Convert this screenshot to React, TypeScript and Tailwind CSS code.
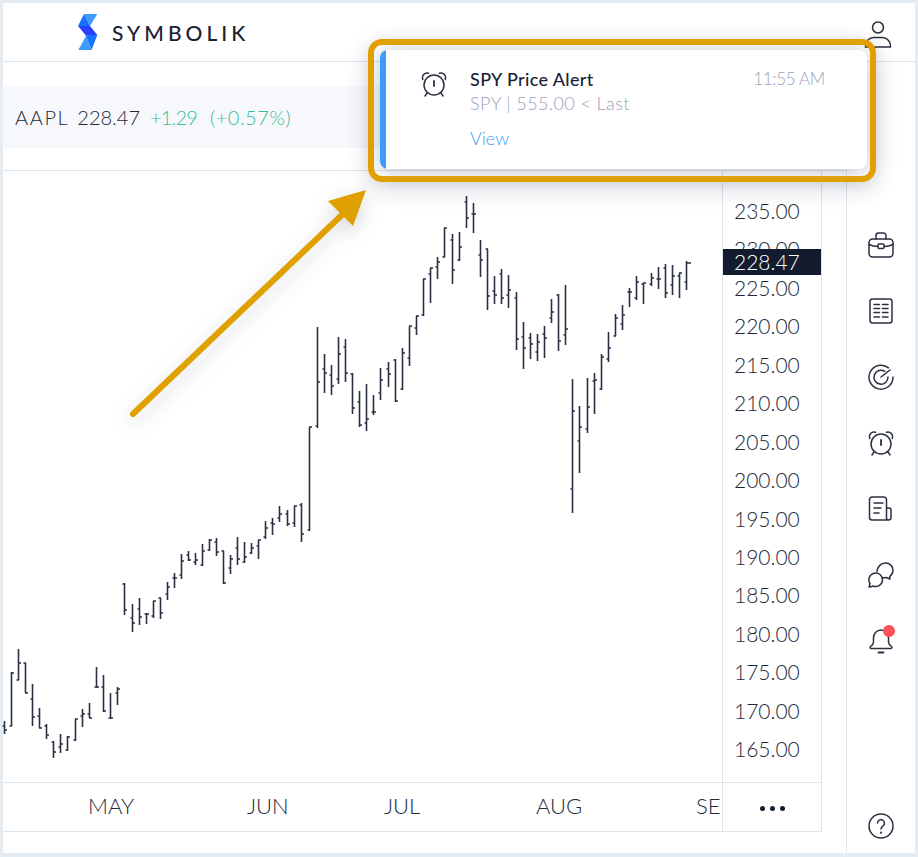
const bars: number[][] = [
[5,720,733,725,729],[12,671,725,725,672],[19,648,679,679,662],[26,662,692,662,692],[33,683,725,698,716],[40,707,727,715,727],[47,723,738,725,734],[54,740,757,741,751],[61,733,752,746,743],[68,735,750,749,736],[76,718,740,739,718],[83,708,726,715,713],[90,702,717,713,717],[97,666,687,686,686],[104,674,711,686,710],[111,692,718,717,717],[118,686,704,692,688],[125,582,614,583,609],[133,603,631,617,622],[140,597,624,608,616],[147,612,623,613,613],[154,600,617,615,600],[161,597,618,597,612],
[168,581,599,593,586],[175,572,587,577,577],[182,553,578,574,560],[189,550,560,554,559],[196,552,564,561,559],[203,543,565,564,550],[210,538,550,549,539],[217,537,555,541,551],[224,550,583,550,582],[231,554,573,567,558],[238,536,564,547,558],[245,541,562,561,556],[252,542,553,552,547],[259,539,558,545,539],[266,520,538,536,527],[273,517,534,522,523],[280,505,521,517,513],[288,509,525,513,523],[295,505,526,522,505],[302,502,541,504,533],[310,426,530,529,426],
[318,326,427,425,381],[325,353,392,368,372],[332,364,394,374,385],[339,336,383,378,353],[346,338,381,346,372],[353,372,413,373,407],[360,390,426,401,424],[367,383,430,422,418],[374,394,414,411,411],[381,367,399,392,379],[389,361,386,368,373],[396,358,401,359,400],[403,347,389,388,352],[410,325,365,357,325],[417,315,334,327,315],[424,278,315,314,278],[431,267,302,273,267],[438,256,278,266,261],[445,227,256,256,227],[453,233,283,239,269],[460,231,260,259,246],[467,195,227,201,217],[474,202,232,213,213],[481,239,276,254,259],[488,248,309,248,295],[495,275,303,290,294],[502,268,303,273,297],[509,274,307,294,289],
[517,291,349,297,338],[524,321,368,336,347],[531,332,358,337,343],[538,333,360,351,341],[545,325,357,333,337],[552,298,322,317,311],[559,293,350,294,340],[566,284,344,334,328],
[573,378,512,488,410],[580,405,472,440,426],[588,377,432,428,406],[595,372,413,380,379],[602,353,389,388,356],[609,331,361,358,347],[616,313,335,335,317],[623,304,329,323,314],[630,287,306,291,291],[637,275,299,297,281],[644,282,303,283,282],[652,272,285,283,277],[659,266,288,278,278],[666,263,297,267,292],[673,264,294,284,275],[680,272,297,275,272],[687,260,289,281,262],
];

const font = { fontFamily: 'Lato, "Liberation Sans", sans-serif' };
const prices = ['235.00','230.00','225.00','220.00','215.00','210.00','205.00','200.00','195.00','190.00','185.00','180.00','175.00','170.00','165.00'];

function Ico({ children }: { children: React.ReactNode }) {
  return (
    <div className="h-[66px] flex items-center justify-center">
      <svg width="26" height="26" viewBox="0 0 26 26" fill="none" stroke="#2a3040" strokeWidth="1.5" strokeLinecap="round" strokeLinejoin="round">{children}</svg>
    </div>
  );
}

function Alarm({ size = 26 }: { size?: number }) {
  return (
    <svg width={size} height={size} viewBox="0 0 26 26" fill="none" stroke="#2a3040" strokeWidth="1.5" strokeLinecap="round" strokeLinejoin="round">
      <circle cx="13" cy="14" r="10" />
      <path d="M13 10v5" strokeWidth="1.8" />
      <path d="M1.8 8.5C.5 5 3.5 1 7.5 2.2M24.2 8.5C25.5 5 22.5 1 18.5 2.2" />
      <path d="M6 22l-2 3M20 22l2 3" />
    </svg>
  );
}

export default function App() {
  return (
    <div className="relative w-[918px] h-[857px] overflow-hidden bg-[#e5edf2] pt-[3px] pl-[3px] pr-[3px] pb-[4px]" style={font}>
      <div className="flex flex-col h-full bg-white text-[#232938]">
        <header className="h-[59px] shrink-0 border-b border-[#dfe3ec] flex items-center justify-between pl-[75px] pr-[22px]">
          <div className="flex items-center gap-[14px]">
            <svg width="20" height="36" viewBox="0 0 20 36">
              <polygon points="6,0 19.300,0 12,12" fill="#3f9bff" />
              <polygon points="6,0 12,12 0,12" fill="#1673ff" />
              <polygon points="0,12 12,12 19.300,21 7.500,21" fill="#2b3fff" />
              <polygon points="7.500,21 19.300,21 13.600,36" fill="#1673ff" />
              <polygon points="8,22 13.600,36 .3,36" fill="#3f9bff" />
            </svg>
            <span className="text-[21px] font-medium tracking-[4px] text-[#1a2233] leading-none">SYMBOLIK</span>
          </div>
          <svg className="mt-[3px]" width="30" height="30" viewBox="0 0 30 30" fill="none" stroke="#2a3040" strokeWidth="1.5">
            <circle cx="15" cy="8.5" r="5.5" />
            <path d="M2.5 28c-.5-5 3-9 8-9.5h9c5 .5 8.500 4.500 8 9.500z" />
          </svg>
        </header>
        <div className="flex flex-1 min-h-0">
          <main className="w-[844px] shrink-0 flex flex-col border-r border-[#dfe6ef] pb-[21px]">
            <div className="h-[109px] shrink-0 border-b border-[#dfe3ec] pt-[24px]">
              <div className="h-[62px] bg-[#f7f8fb] flex items-center pl-[12px] text-[20px] font-light">
                <span className="tracking-[1.6px]">AAPL</span>
                <span className="ml-[8px]">228.47</span>
                <span className="ml-[10px] text-[#36bd9b] tracking-[-0.8px]">+1.29</span>
                <span className="ml-[13px] text-[#36bd9b] tracking-[0.5px]">(+0.57%)</span>
              </div>
            </div>
            <div className="flex-1 min-h-0 flex flex-col w-[819px] border-r border-b border-[#dfe3ec]">
              <div className="flex flex-1 min-h-0">
                <div className="flex-1 min-w-0 relative">
                  <svg className="absolute left-[-3px] top-[-170px]" width="722" height="785" fill="none" stroke="#2a3040">
                    {bars.map(([x, h, l, o, c]) => (
                      <g key={x}>
                        <path d={`M${x - 0.5} ${h}V${l}`} strokeWidth="1.6" />
                        <path d={`M${x - 2.5} ${o}H${x}M${x - 1} ${c}H${x + (x === 687 ? 4 : 2)}`} strokeWidth="1.6" />
                      </g>
                    ))}
                  </svg>
                </div>
                <div className="w-[99px] shrink-0 border-l border-[#dfe3ec] relative pt-[21px] pl-[11px] text-[21px] font-light leading-[38.43px]">
                  {prices.map((p) => <div key={p}>{p}</div>)}
                  <div className="absolute left-0 top-[78px] w-[98px] h-[26px] bg-[#131c2e] text-white flex items-center pl-[11px]">228.47</div>
                </div>
              </div>
              <div className="h-[49px] shrink-0 border-t border-[#dfe3ec] flex text-[22px] font-light">
                <div className="flex-1 min-w-0 relative overflow-hidden leading-[46px]">
                  <span className="absolute left-[85px]">MAY</span>
                  <span className="absolute left-[244px]">JUN</span>
                  <span className="absolute left-[381px]">JUL</span>
                  <span className="absolute left-[533px]">AUG</span>
                  <span className="absolute left-[693px]">SE</span>
                </div>
                <div className="w-[99px] shrink-0 border-l border-[#dfe3ec] flex items-center justify-center pt-[2px] gap-[5px]">
                  <span className="w-[5px] h-[5px] rounded-full bg-[#131c2e]" />
                  <span className="w-[5px] h-[5px] rounded-full bg-[#131c2e]" />
                  <span className="w-[5px] h-[5px] rounded-full bg-[#131c2e]" />
                </div>
              </div>
            </div>
          </main>
          <aside className="flex-1 flex flex-col pt-[150px] pb-[14px]">
            <Ico>
              <rect x="1" y="7" width="24" height="18" rx="3.500" />
              <path d="M8 7V3.500A2.500 2.500 0 0 1 10.500 1h5A2.500 2.500 0 0 1 18 3.500V7" />
              <path d="M1 12.500c3 1.500 6 2 9 2M25 12.500c-3 1.500-6 2-9 2" />
              <rect x="10" y="12" width="6" height="4.500" rx="1" />
            </Ico>
            <Ico>
              <rect x="2" y="1" width="22" height="24" rx="2.500" />
              <path d="M6 6.500h5.500M14.500 6.500H20M6 10.500h5.500M14.500 10.500H20M6 14.500h5.500M14.500 14.500H20M6 19h5.500M14.500 19H20" />
            </Ico>
            <Ico>
              <path d="M20.500 3.800A12 12 0 1 0 25 13" />
              <path d="M16.800 7.300A7 7 0 1 0 20 13" />
              <path d="M13 13l9-7" />
            </Ico>
            <div className="h-[66px] flex items-center justify-center"><Alarm /></div>
            <Ico>
              <path d="M20 24H4a2.500 2.500 0 0 1-2.500-2.500V3.500A2.500 2.500 0 0 1 4 1h12a2.500 2.500 0 0 1 2.500 2.500V22a2 2 0 0 0 2 2a2.500 2.500 0 0 0 2.500-2.500V14a2 2 0 0 0-2-2h-2" />
              <path d="M6 7h9M6 12h7M6 17h5" />
            </Ico>
            <Ico>
              <path d="M9 9.500C9.500 4.500 13 1 17.500 1c4.300 0 7.500 3.200 7.500 7.300 0 2.700-1.300 4.800-3.300 6.200l.3 2.500-3.700-1.500c-1 .3-2 .4-3 .3" />
              <path d="M1 25l1-3.500A6.800 6.800 0 1 1 5 24c-1.500.700-2.800 1-4 1z" />
            </Ico>
            <div className="h-[66px] flex items-center justify-center relative">
              <svg width="26" height="26" viewBox="0 0 26 26" fill="none" stroke="#2a3040" strokeWidth="1.5" strokeLinecap="round" strokeLinejoin="round">
                <path d="M5.500 14V10C5.500 5.500 9 2 13 2s7.500 3.500 7.500 8v4c0 2 1 3 3 4.500.8.700.5 2-.8 2H3.300c-1.300 0-1.600-1.300-.8-2C4.500 17 5.500 16 5.500 14z" />
                <path d="M10.500 24.500h5" strokeWidth="1.800" />
              </svg>
              <span className="absolute left-[36px] top-[17px] w-[12px] h-[12px] rounded-full bg-[#ff5257]" />
            </div>
            <div className="mt-auto flex justify-center">
              <svg width="26" height="26" viewBox="0 0 26 26" fill="none" stroke="#2a3040" strokeWidth="1.5" strokeLinecap="round" strokeLinejoin="round">
                <circle cx="13" cy="13" r="12" />
                <path d="M9.500 10a3.500 3.500 0 1 1 5.500 3c-1.300.8-2 1.500-2 3" />
                <path d="M13 19.500v.3" strokeWidth="2" />
              </svg>
            </div>
          </aside>
        </div>
      </div>

      {/* annotation arrow */}
      <svg className="absolute left-0 top-0 [filter:drop-shadow(0_6px_10px_rgba(40,50,80,0.22))]" width="400" height="430" fill="none">
        <path d="M133 414L345 212" stroke="#e0a000" strokeWidth="6" strokeLinecap="round" />
        <polygon points="366,190 328,201 353,226" fill="#e0a000" />
      </svg>

      {/* notification toast */}
      <div className="absolute left-[380px] top-[50px] w-[487px] h-[119px] rounded-[8px] bg-white flex overflow-hidden shadow-[0_2px_20px_rgba(40,50,80,0.3)]">
        <div className="w-[6px] bg-[#3d9bfa] shrink-0" />
        <div className="w-[35px] shrink-0" />
        <div className="w-[49px] shrink-0 pt-[21px]"><Alarm /></div>
        <div className="flex-1 pt-[17px]">
          <div className="text-[18px] font-medium text-[#1a2233] leading-[24px] tracking-[0.35px]">SPY Price Alert</div>
          <div className="text-[18px] font-light text-[#98a1ba] leading-[24px] tracking-[0.4px]">SPY | 555.00 &lt; Last</div>
          <div className="text-[18px] font-light text-[#3d9bfa] leading-[24px] mt-[11px]">View</div>
        </div>
        <div className="pt-[17px] pr-[42px] text-[17px] font-light text-[#98a1ba] leading-[24px] tracking-[-0.3px]">11:55 AM</div>
      </div>

      {/* annotation frame */}
      <div className="absolute left-[368px] top-[39px] w-[508px] h-[143px] rounded-[14px] border-[6px] border-[#e0a000] shadow-[0_6px_22px_rgba(40,50,80,0.2)]" />
    </div>
  );
}
